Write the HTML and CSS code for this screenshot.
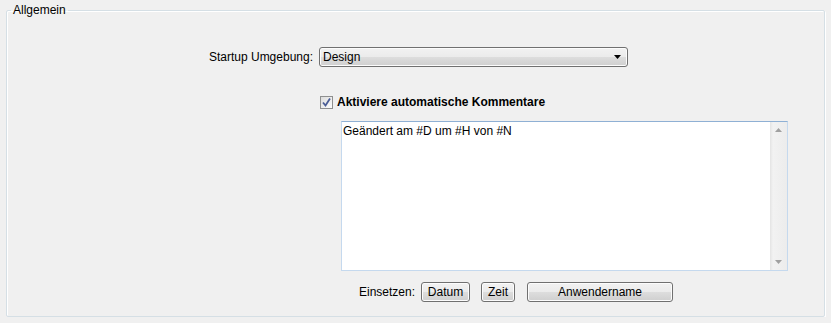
FILE: index.html
```html
<!DOCTYPE html>
<html lang="de">
<head>
    <meta charset="UTF-8">
    <title>Allgemein</title>
    <link rel="stylesheet" href="styles.css">
</head>
<body>
    <fieldset class="group">
        <legend>Allgemein</legend>

        <div class="row env-row">
            <label class="env-label">Startup Umgebung:</label>
            <div class="combo">
                <span class="combo-text">Design</span>
                <svg class="combo-arrow" width="7" height="4" viewBox="0 0 7 4"><path d="M0 0H7L3.5 4Z" fill="#000"/></svg>
            </div>
        </div>

        <div class="row check-row">
            <span class="check">
                <svg width="11" height="11" viewBox="0 0 11 11"><path d="M2 5.5L4.5 8.5L9 1.5" stroke="#4a5d96" stroke-width="1.8" fill="none"/></svg>
            </span>
            <span class="check-label">Aktiviere automatische Kommentare</span>
        </div>

        <div class="memo">
            <div class="memo-text">Geändert am #D um #H von #N</div>
            <div class="scrollbar">
                <svg width="7" height="4" viewBox="0 0 7 4"><path d="M3.5 0L7 4H0Z" fill="#a0a0a0"/></svg>
                <svg width="7" height="4" viewBox="0 0 7 4"><path d="M0 0H7L3.5 4Z" fill="#a0a0a0"/></svg>
            </div>
        </div>

        <div class="row insert-row">
            <span class="insert-label">Einsetzen:</span>
            <button type="button" class="btn btn-date">Datum</button>
            <button type="button" class="btn btn-time">Zeit</button>
            <button type="button" class="btn btn-user">Anwendername</button>
        </div>
    </fieldset>
</body>
</html>
```

FILE: styles.css
```css
body {
    margin: 0;
    background-color: #f0f0f0;
    font-family: "Liberation Sans", Arial, sans-serif;
    font-size: 12px;
    color: #000;
}
.group {
    margin: 3px 6px 0 6px;
    padding: 0 0 0 0;
    height: 314px;
    box-sizing: border-box;
    border: 1px solid #d5dfe5;
    border-radius: 2px;
    box-shadow: inset 1px 1px 0 #fff, 1px 1px 0 #fff;
}
.group legend {
    margin-left: 4px;
    padding: 0 2px;
    line-height: 14px;
}
.row {
    display: flex;
    align-items: center;
}
.env-row {
    margin-top: 30px;
    gap: 6px;
}
.env-label {
    width: 306px;
    text-align: right;
}
.combo {
    width: 309px;
    height: 20px;
    box-sizing: border-box;
    border: 1px solid #707070;
    border-radius: 3px;
    background: linear-gradient(#f2f2f2 0%, #ebebeb 50%, #dddddd 51%, #cfcfcf 100%);
    box-shadow: inset 0 0 0 1px #fcfcfc;
    display: flex;
    align-items: center;
    justify-content: space-between;
    padding: 0 6px 0 3px;
}
.check-row {
    margin-top: 28px;
    margin-left: 313px;
    gap: 4px;
}
.check {
    width: 13px;
    height: 13px;
    box-sizing: border-box;
    border: 1px solid #8e8f8f;
    background: linear-gradient(135deg, #dcdcdc, #fdfdfd);
    display: flex;
    align-items: center;
    justify-content: center;
}
.check-label {
    font-weight: bold;
}
.memo {
    margin-top: 12px;
    margin-left: 334px;
    width: 447px;
    height: 150px;
    box-sizing: border-box;
    border: 1px solid #c5d9ee;
    border-top-color: #8fb0d4;
    background-color: #fff;
    display: flex;
}
.memo-text {
    flex: 1;
    padding: 2px 1px;
}
.scrollbar {
    width: 17px;
    background: linear-gradient(90deg, #e4e4e4, #f2f2f2 3px, #ececec);
    display: flex;
    flex-direction: column;
    justify-content: space-between;
    align-items: center;
    padding: 6px 0 6px 0;
}
.insert-row {
    margin-top: 11px;
    margin-left: 352px;
}
.insert-label {
    width: 62px;
}
.btn {
    font-family: "Liberation Sans", Arial, sans-serif;
    font-size: 12px;
    height: 20px;
    box-sizing: border-box;
    border: 1px solid #707070;
    border-radius: 3px;
    background: linear-gradient(#f2f2f2 0%, #ebebeb 50%, #dddddd 51%, #cfcfcf 100%);
    box-shadow: inset 0 0 0 1px #fcfcfc;
    padding: 0;
    color: #000;
}
.btn-date {
    width: 49px;
}
.btn-time {
    width: 34px;
    margin-left: 11px;
}
.btn-user {
    width: 146px;
    margin-left: 12px;
}
```
